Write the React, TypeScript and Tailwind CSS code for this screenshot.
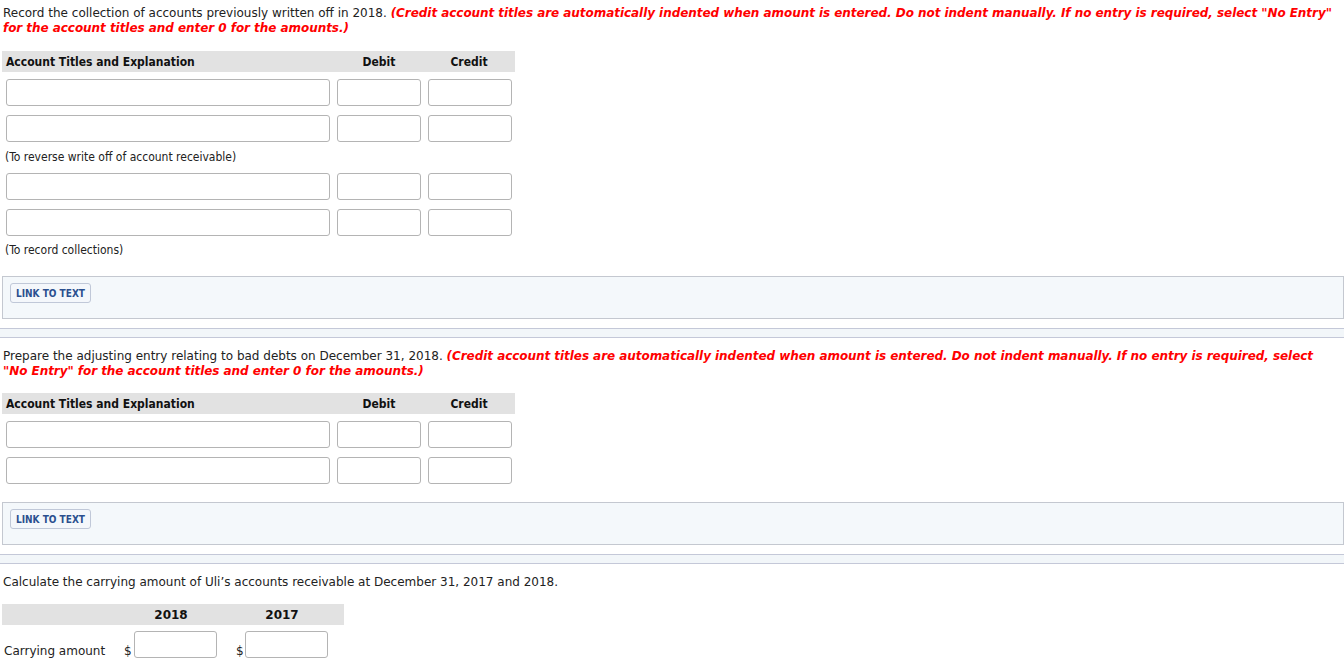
import React from "react";

const verdana = { fontFamily: '"DejaVu Sans", Verdana, sans-serif' };

function Field({ w }: { w: string }) {
  return <div className={`${w} h-[27px] rounded-[3px] border border-[#b4b4b4] bg-white`} />;
}

function JournalHeader() {
  return (
    <div
      className="flex h-[21px] w-[513px] items-center bg-[#e2e2e2] text-[12px] font-bold text-[#111]"
      style={{ fontFamily: '"DejaVu Sans Condensed", Tahoma, sans-serif' }}
    >
      <div className="w-[333px] pl-[4px]">Account Titles and Explanation</div>
      <div className="w-[88px] text-center">Debit</div>
      <div className="w-[92px] text-center">Credit</div>
    </div>
  );
}

function JournalRow() {
  return (
    <div className="flex gap-[7px] pl-[6px]">
      <Field w="w-[324px]" />
      <Field w="w-[84px]" />
      <Field w="w-[84px]" />
    </div>
  );
}

function Note({ children }: { children: React.ReactNode }) {
  return (
    <div
      className="pl-[5px] text-[12px] leading-[14px] text-[#222]"
      style={{ fontFamily: '"DejaVu Sans Condensed", Tahoma, sans-serif' }}
    >
      {children}
    </div>
  );
}

function LinkPanel() {
  return (
    <div className="ml-[2px] flex h-[43px] items-start border border-[#c4c8d0] bg-[#f4f8fb] pl-[7px] pt-[6px]">
      <div
        className="flex h-[20px] items-center rounded-[3px] border border-[#c0c8d8] bg-[#f4f7fb] px-[5px] text-[10px] font-bold text-[#2b4f8f]"
        style={{ fontFamily: '"DejaVu Sans Condensed", Tahoma, sans-serif' }}
      >
        LINK TO TEXT
      </div>
    </div>
  );
}

function Separator() {
  return <div className="h-[10px] border-y border-[#c4c8d8] bg-[#f2f6f9]" />;
}

function Prompt({ plain, red }: { plain: string; red: string }) {
  return (
    <div className="pl-[3px] pr-0 text-[12px] leading-[15px] text-[#222]" style={verdana}>
      {plain} <span className="font-bold italic tracking-[-0.05px] text-[#ff0000]">{red}</span>
    </div>
  );
}

const RED =
  '(Credit account titles are automatically indented when amount is entered. Do not indent manually. If no entry is required, select "No\u00a0Entry" for the account titles and enter 0 for the amounts.)';

export default function App() {
  return (
    <div className="h-[663px] w-[1344px] overflow-hidden bg-white pt-[6px]" style={verdana}>
      <Prompt plain="Record the collection of accounts previously written off in 2018." red={RED} />
      <div className="mt-[15px] pl-[2px]">
        <JournalHeader />
      </div>
      <div className="mt-[7px] flex flex-col gap-[9px]">
        <JournalRow />
        <JournalRow />
      </div>
      <div className="mt-[8px]">
        <Note>(To reverse write off of account receivable)</Note>
      </div>
      <div className="mt-[9px] flex flex-col gap-[9px]">
        <JournalRow />
        <JournalRow />
      </div>
      <div className="mt-[7px]">
        <Note>(To record collections)</Note>
      </div>
      <div className="mt-[19px]">
        <LinkPanel />
      </div>
      <div className="mt-[9px]">
        <Separator />
      </div>
      <div className="mt-[11px]">
        <Prompt plain="Prepare the adjusting entry relating to bad debts on December 31, 2018." red={RED} />
      </div>
      <div className="mt-[14px] pl-[2px]">
        <JournalHeader />
      </div>
      <div className="mt-[7px] flex flex-col gap-[9px]">
        <JournalRow />
        <JournalRow />
      </div>
      <div className="mt-[18px]">
        <LinkPanel />
      </div>
      <div className="mt-[9px]">
        <Separator />
      </div>
      <div className="mt-[11px] pl-[3px] text-[12px] leading-[15px] text-[#222]">
        Calculate the carrying amount of Uli’s accounts receivable at December 31, 2017 and 2018.
      </div>
      <div className="mt-[14px] ml-[2px] flex h-[21px] w-[342px] items-center bg-[#e2e2e2] text-[12px] font-bold text-[#111]">
        <div className="w-[120px]" />
        <div className="w-[98px] text-center">2018</div>
        <div className="w-[124px] text-center">2017</div>
      </div>
      <div className="mt-[6px] flex items-end text-[12px] text-[#222]">
        <div className="w-[124px] pl-[4px] leading-[14px]">Carrying amount</div>
        <div className="w-[10px] leading-[14px]">$</div>
        <Field w="w-[83px]" />
        <div className="w-[19px]" />
        <div className="w-[9px] leading-[14px]">$</div>
        <Field w="w-[83px]" />
      </div>
    </div>
  );
}
